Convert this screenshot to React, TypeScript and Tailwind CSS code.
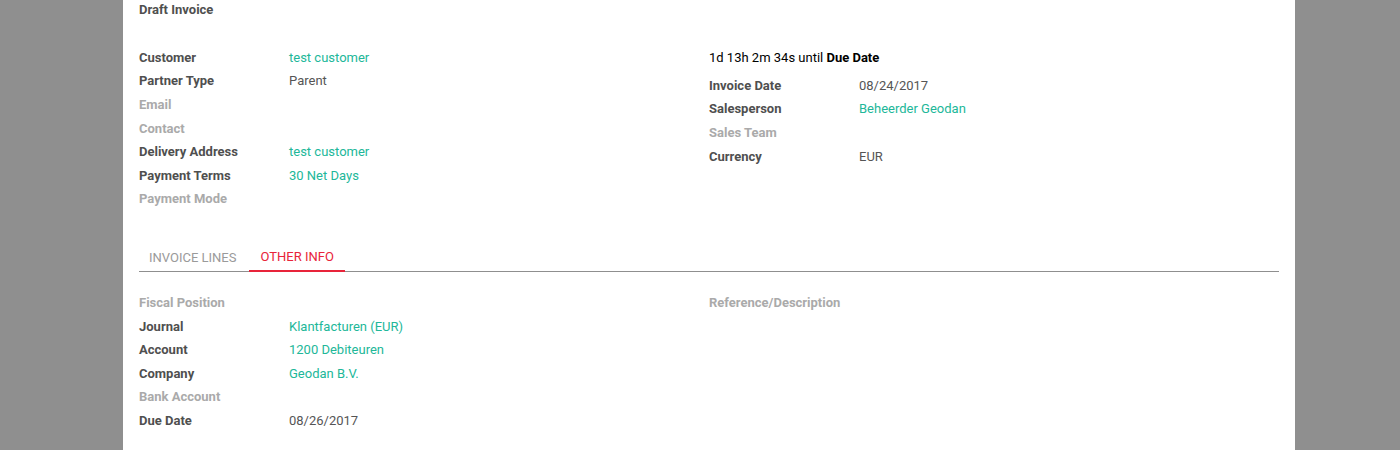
import React from "react";

const LINK = "text-[#21b799]";
const LBL = "font-bold text-[#4f4f4f]";
const MUTED = "font-bold text-[#aaaaaa]";

type Row = { label: string; value?: string; link?: boolean; muted?: boolean };

function Rows({ rows }: { rows: Row[] }) {
  return (
    <div className="flex flex-col">
      {rows.map((r) => (
        <div key={r.label} className="flex h-[23.6px] items-center">
          <div className={`w-[150px] shrink-0 ${r.muted ? MUTED : LBL}`}>{r.label}</div>
          {r.value && <div className={r.link ? LINK : "text-[#555555]"}>{r.value}</div>}
        </div>
      ))}
    </div>
  );
}

export default function App() {
  return (
    <div
      className="flex h-[450px] w-[1400px] overflow-hidden bg-[#8f8f8f] text-[13px] leading-[18px]"
      style={{ fontFamily: "Roboto, 'Liberation Sans', sans-serif" }}
    >
      <div className="ml-[123px] w-[1172px] shrink-0 bg-white px-4">
        <div className={`pt-[1px] ${LBL}`}>Draft Invoice</div>
        <div className="mt-[27px] grid grid-cols-2 gap-0">
          <Rows
            rows={[
              { label: "Customer", value: "test customer", link: true },
              { label: "Partner Type", value: "Parent" },
              { label: "Email", muted: true },
              { label: "Contact", muted: true },
              { label: "Delivery Address", value: "test customer", link: true },
              { label: "Payment Terms", value: "30 Net Days", link: true },
              { label: "Payment Mode", muted: true },
            ]}
          />
          <div className="flex flex-col">
            <div className="flex h-[23.6px] items-center text-black">
              <span>1d 13h 2m 34s until&nbsp;</span>
              <span className="font-bold">Due Date</span>
            </div>
            <div className="mt-[4.5px]">
              <Rows
                rows={[
                  { label: "Invoice Date", value: "08/24/2017" },
                  { label: "Salesperson", value: "Beheerder Geodan", link: true },
                  { label: "Sales Team", muted: true },
                  { label: "Currency", value: "EUR" },
                ]}
              />
            </div>
          </div>
        </div>

        <div className="mt-[34px] flex border-b border-[#8f8f8f]">
          <div className="flex h-[26px] items-center pl-[10px] pr-[13px] text-[#9a9a9a]">INVOICE LINES</div>
          <div className="-mb-px flex h-[27px] items-center border-b-2 border-[#e8243a] pl-[11px] pr-[11px] pb-[1px] text-[#e8243a]">
            OTHER INFO
          </div>
        </div>

        <div className="mt-[19px] grid grid-cols-2">
          <Rows
            rows={[
              { label: "Fiscal Position", muted: true },
              { label: "Journal", value: "Klantfacturen (EUR)", link: true },
              { label: "Account", value: "1200 Debiteuren", link: true },
              { label: "Company", value: "Geodan B.V.", link: true },
              { label: "Bank Account", muted: true },
              { label: "Due Date", value: "08/26/2017" },
            ]}
          />
          <div>
            <div className={`flex h-[23.6px] items-center ${MUTED}`}>Reference/Description</div>
          </div>
        </div>
      </div>
    </div>
  );
}
